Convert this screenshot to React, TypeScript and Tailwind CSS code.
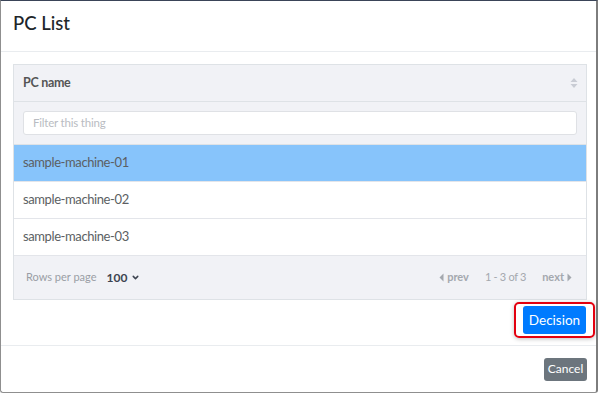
import { ChevronDown } from "lucide-react"

const rows = ["sample-machine-01", "sample-machine-02", "sample-machine-03"]

export default function App() {
  return (
    <div className="w-[600px] h-[394px] bg-white" style={{ fontFamily: 'Lato, "Open Sans", sans-serif' }}>
      <div className="w-[598px] h-[393px] flex flex-col border-t border-t-[#3a4458] border-l border-r-2 border-b border-l-[#8f8f8f] border-r-[#7d7d7d] border-b-[#8f8f8f] rounded-b-[3px]">
        {/* header */}
        <div className="h-[51px] flex items-center px-[12px] pb-[5px] border-b border-[#e9ecef]">
          <h1 className="text-[18.5px] font-medium text-[#212529] leading-none">PC List</h1>
        </div>

        {/* body */}
        <div className="pl-[12px] pr-[9px] pt-[12px] pb-[7px]">
          <div className="border border-[#dee2e6] text-[13px]">
            <div className="h-[37px] bg-[#f1f2f6] flex items-center justify-between px-[9px] border-b border-[#dee2e6]">
              <span className="font-bold text-[12.5px] tracking-[-0.3px] text-[#555]">PC name</span>
              <svg width="8" height="12" viewBox="0 0 8 12" className="mr-[-1px]">
                <path d="M4 1 L7.5 5 H0.5 Z" fill="#c9ccd4" />
                <path d="M4 11 L7.5 7 H0.5 Z" fill="#c9ccd4" />
              </svg>
            </div>
            <div className="h-[43px] bg-[#f1f2f6] flex items-center px-[9px] border-b border-[#dee2e6]">
              <div className="w-full h-[24px] bg-white border border-[#dfe1e5] rounded-[3px] flex items-center px-[9px]">
                <span className="text-[11.5px] tracking-[-0.2px] text-[#b9bcc2]">Filter this thing</span>
              </div>
            </div>
            {rows.map((r, i) => (
              <div
                key={r}
                className={`h-[37px] flex items-center px-[9px] tracking-[-0.4px] text-[#5c5f63] border-b border-[#e3e5ea] ${
                  i === 0 ? "bg-[#87c4fb]" : "bg-white"
                }`}
              >
                {r}
              </div>
            ))}
            <div className="h-[43px] bg-[#f1f2f6] flex items-center justify-between px-[12px] text-[11px]">
              <div className="flex items-center">
                <span className="text-[#9a9ea5]">Rows per page</span>
                <span className="ml-[10px] font-bold text-[12px] text-[#3d4450]">100</span>
                <ChevronDown className="w-[9px] h-[9px] ml-[4px] text-[#3d4450]" strokeWidth={4} />
              </div>
              <div className="flex items-center text-[#a4a8ae] mr-[2px]">
                <span className="flex items-center font-bold">
                  <svg width="5" height="9" viewBox="0 0 5 9" className="mr-[3px]">
                    <path d="M4.5 0.5 L0.5 4.5 L4.5 8.5 Z" fill="#a4a8ae" />
                  </svg>
                  prev
                </span>
                <span className="ml-[16px] tracking-[-0.3px]">1 - 3 of 3</span>
                <span className="ml-[16px] flex items-center font-bold">
                  next
                  <svg width="5" height="9" viewBox="0 0 5 9" className="ml-[3px]">
                    <path d="M0.5 0.5 L4.5 4.5 L0.5 8.5 Z" fill="#a4a8ae" />
                  </svg>
                </span>
              </div>
            </div>
          </div>

          <div className="flex justify-end mt-[2px] mr-[-8px]">
            <div className="border-2 border-[#e3000f] rounded-[5px] px-[7px] py-[2px] shadow-[0_1px_4px_rgba(0,0,0,0.25)]">
              <button className="h-[28px] w-[63px] bg-[#007bff] text-white text-[13.5px] rounded-[3px]">Decision</button>
            </div>
          </div>
        </div>

        {/* footer */}
        <div className="flex-1 border-t border-[#e9ecef] flex items-center justify-end pr-[9px]">
          <button className="h-[23px] w-[43px] bg-[#6c757d] text-white text-[12px] rounded-[3px]">Cancel</button>
        </div>
      </div>
    </div>
  )
}
